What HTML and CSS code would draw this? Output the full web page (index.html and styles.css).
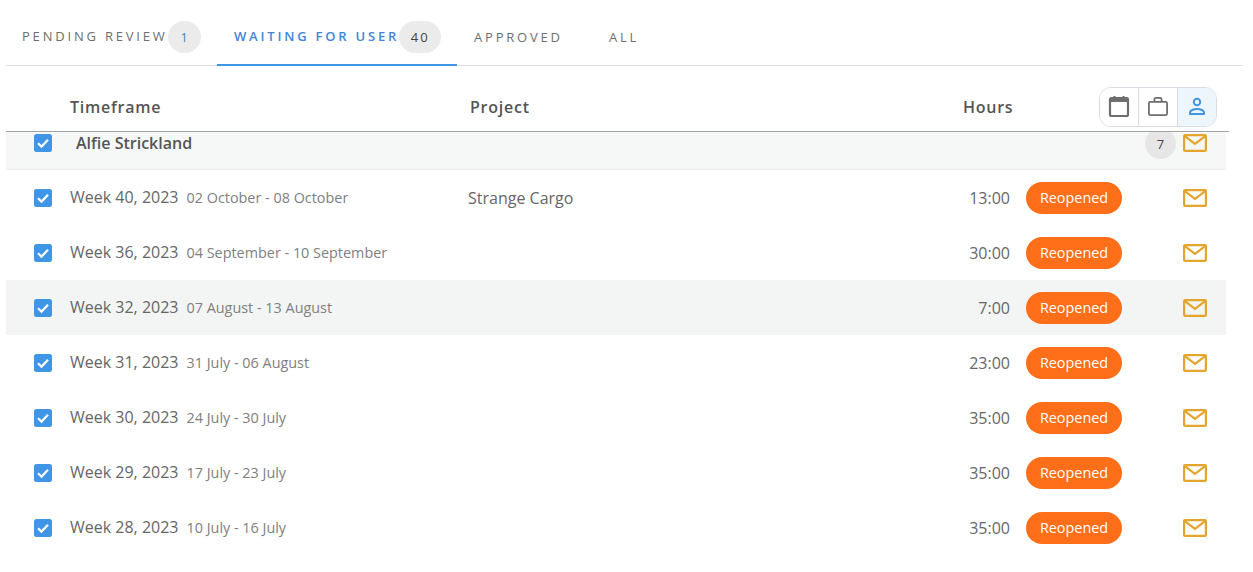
FILE: index.html
```html
<!DOCTYPE html>
<html lang="en">
<head>
<meta charset="utf-8">
<title>Timesheets</title>
<link rel="stylesheet" href="styles.css">
</head>
<body>
<svg class="defs" width="0" height="0" aria-hidden="true">
  <symbol id="check" viewBox="0 0 18 18"><rect width="18" height="18" rx="2.500" fill="#3f96e6"/><path d="M4 9.300l3.500 3.300L14 5.700" fill="none" stroke="#fff" stroke-width="2.200"/></symbol>
  <symbol id="mail" viewBox="0 0 24 20"><rect x="1.100" y="2.100" width="21.800" height="15.800" rx="1" fill="none" stroke="#e3a52d" stroke-width="2.200"/><path d="M1.500 2.800L12 10.800 22.500 2.800" fill="none" stroke="#e3a52d" stroke-width="2.200"/></symbol>
</svg>
<nav class="tabs">
  <a class="tab tab-pending">PENDING REVIEW<span class="count count-sm">1</span></a>
  <a class="tab tab-waiting active">WAITING FOR USER<span class="count count-lg">40</span></a>
  <a class="tab tab-approved">APPROVED</a>
  <a class="tab tab-all">ALL</a>
</nav>
<main class="table">
  <header class="row head">
    <span></span>
    <span>Timeframe</span>
    <span class="project">Project</span>
    <span class="hours">Hours</span>
    <div class="toggle">
      <button class="toggle-btn"><svg width="24" height="24" viewBox="0 0 24 24"><rect x="3" y="3.200" width="18" height="17.800" rx="1.500" fill="none" stroke="#6e6e6e" stroke-width="2.200"/><path d="M3 3h18v4H3z" fill="#6e6e6e"/><path d="M7.500 1v3M16.500 1v3" stroke="#6e6e6e" stroke-width="2"/></svg></button>
      <button class="toggle-btn"><svg width="24" height="24" viewBox="0 0 24 24"><rect x="2.900" y="6.900" width="18.200" height="13.200" rx="1.500" fill="none" stroke="#6e6e6e" stroke-width="1.800"/><path d="M8.400 6.900V4.400a1.500 1.500 0 0 1 1.500-1.500h4.200a1.500 1.500 0 0 1 1.500 1.500v2.500" fill="none" stroke="#6e6e6e" stroke-width="1.800"/></svg></button>
      <button class="toggle-btn on"><svg width="24" height="24" viewBox="0 0 24 24"><circle cx="12" cy="7" r="3.200" fill="none" stroke="#3f96e6" stroke-width="2"/><path d="M5 19v-1.500c0-2 3.500-3.500 7-3.500s7 1.500 7 3.500V19z" fill="none" stroke="#3f96e6" stroke-width="2" stroke-linejoin="round"/></svg></button>
    </div>
  </header>
  <section class="row group">
    <svg class="box"><use href="#check"/></svg>
    <strong class="name">Alfie Strickland</strong>
    <span></span><span></span>
    <span class="count count-row">7</span>
    <svg class="mail"><use href="#mail"/></svg>
  </section>
  <section class="row item">
    <svg class="box"><use href="#check"/></svg>
    <span class="time">Week 40, 2023<small>02 October - 08 October</small></span>
    <span class="project-name">Strange Cargo</span>
    <span class="hours-val">13:00</span>
    <span class="pill">Reopened</span>
    <svg class="mail"><use href="#mail"/></svg>
  </section>
  <section class="row item">
    <svg class="box"><use href="#check"/></svg>
    <span class="time">Week 36, 2023<small>04 September - 10 September</small></span>
    <span class="project-name"></span>
    <span class="hours-val">30:00</span>
    <span class="pill">Reopened</span>
    <svg class="mail"><use href="#mail"/></svg>
  </section>
  <section class="row item hover">
    <svg class="box"><use href="#check"/></svg>
    <span class="time">Week 32, 2023<small>07 August - 13 August</small></span>
    <span class="project-name"></span>
    <span class="hours-val">7:00</span>
    <span class="pill">Reopened</span>
    <svg class="mail"><use href="#mail"/></svg>
  </section>
  <section class="row item">
    <svg class="box"><use href="#check"/></svg>
    <span class="time">Week 31, 2023<small>31 July - 06 August</small></span>
    <span class="project-name"></span>
    <span class="hours-val">23:00</span>
    <span class="pill">Reopened</span>
    <svg class="mail"><use href="#mail"/></svg>
  </section>
  <section class="row item">
    <svg class="box"><use href="#check"/></svg>
    <span class="time">Week 30, 2023<small>24 July - 30 July</small></span>
    <span class="project-name"></span>
    <span class="hours-val">35:00</span>
    <span class="pill">Reopened</span>
    <svg class="mail"><use href="#mail"/></svg>
  </section>
  <section class="row item">
    <svg class="box"><use href="#check"/></svg>
    <span class="time">Week 29, 2023<small>17 July - 23 July</small></span>
    <span class="project-name"></span>
    <span class="hours-val">35:00</span>
    <span class="pill">Reopened</span>
    <svg class="mail"><use href="#mail"/></svg>
  </section>
  <section class="row item">
    <svg class="box"><use href="#check"/></svg>
    <span class="time">Week 28, 2023<small>10 July - 16 July</small></span>
    <span class="project-name"></span>
    <span class="hours-val">35:00</span>
    <span class="pill">Reopened</span>
    <svg class="mail"><use href="#mail"/></svg>
  </section>
</main>
</body>
</html>
```
FILE: styles.css
```css
* { box-sizing: border-box; }
html, body { margin: 0; padding: 0; background: #fff; overflow: hidden; }
body { font-family: "Open Sans", sans-serif; color: #5a5a5a; height: 572px; }
.defs { position: absolute; }

.tabs { display: flex; margin: 0 10px 0 6px; height: 66px; border-bottom: 1px solid #e2e2e2; font-size: 13px; letter-spacing: 2.8px; color: #6e6e6e; }
.tab { display: flex; align-items: center; height: 66px; padding-top: 6px; white-space: nowrap; }
.tab-pending { width: 211px; padding-left: 16px; }
.tab-waiting { width: 240px; padding-left: 17px; padding-top: 8px; color: #3f86d8; font-weight: 600; letter-spacing: 2.8px; border-bottom: 2px solid #3f96e6; }
.tab-approved { width: 152px; padding-left: 17px; padding-top: 8px; }
.tab-all { padding-top: 8px; }
.count { display: inline-flex; align-items: center; justify-content: center; background: #ebebeb; color: #555; font-weight: 400; }
.count-sm { width: 33px; height: 32px; border-radius: 16px; font-size: 12px; letter-spacing: 0; color: #4a7fb5; position: relative; top: 1px; }
.count-lg { width: 42px; height: 32px; border-radius: 16px; font-size: 13px; letter-spacing: 2px; font-weight: 500; color: #444; position: relative; top: 1px; }

.table { margin-left: 6px; width: 1220px; }
.row { display: grid; grid-template-columns: 64px 398px 1fr 60px 112px 104px; align-items: center; }
.box { width: 18px; height: 18px; margin-left: 28px; display: block; }
.mail { width: 24px; height: 20px; margin-left: 61px; display: block; }

.head { position: relative; z-index: 1; background: #fff; height: 66px; margin-right: -3px; border-bottom: 1px solid #a0a4a4; font-size: 16px; font-weight: 600; letter-spacing: 0.75px; color: #555; grid-template-columns: 64px 400px 493px 136px 118px 12px; padding-top: 16px; }
.toggle { display: flex; height: 40px; width: 118px; border: 1px solid #d8dde2; border-radius: 12px; overflow: hidden; background: #fff; }
.toggle-btn { flex: 1; padding: 0; margin: 0; border: 0; border-left: 1px solid #dcdcdc; background: #fff; display: flex; align-items: center; justify-content: center; }
.toggle-btn:first-child { border-left: 0; }
.toggle-btn.on { background: #eef6fd; }

.group { height: 38px; background: #f6f8f8; border-bottom: 1px solid #e9ecec; align-items: start; font-size: 16px; }
.group .box { margin-top: 2px; }
.group .mail { margin-top: 1px; }
.name { font-weight: 600; color: #555; margin-left: 6px; line-height: 22px; white-space: nowrap; }
.count-row { width: 31px; height: 31px; border-radius: 50%; background: #e6e6e6; font-size: 13px; justify-self: end; margin-right: -54px; margin-top: -4px; color: #444; }

.item { height: 55px; font-size: 16px; color: #666; }
.item.hover { background: #f3f5f5; }
.time { white-space: nowrap; margin-bottom: 2px; }
.time small { font-size: 14.4px; color: #808080; margin-left: 8px; }
.hours-val { text-align: right; justify-self: end; }
.pill { display: flex; align-items: center; justify-content: center; width: 96px; height: 32px; border-radius: 16px; background: #ff6f1a; color: #fff; font-size: 14.4px; margin-left: 16px; }
```
